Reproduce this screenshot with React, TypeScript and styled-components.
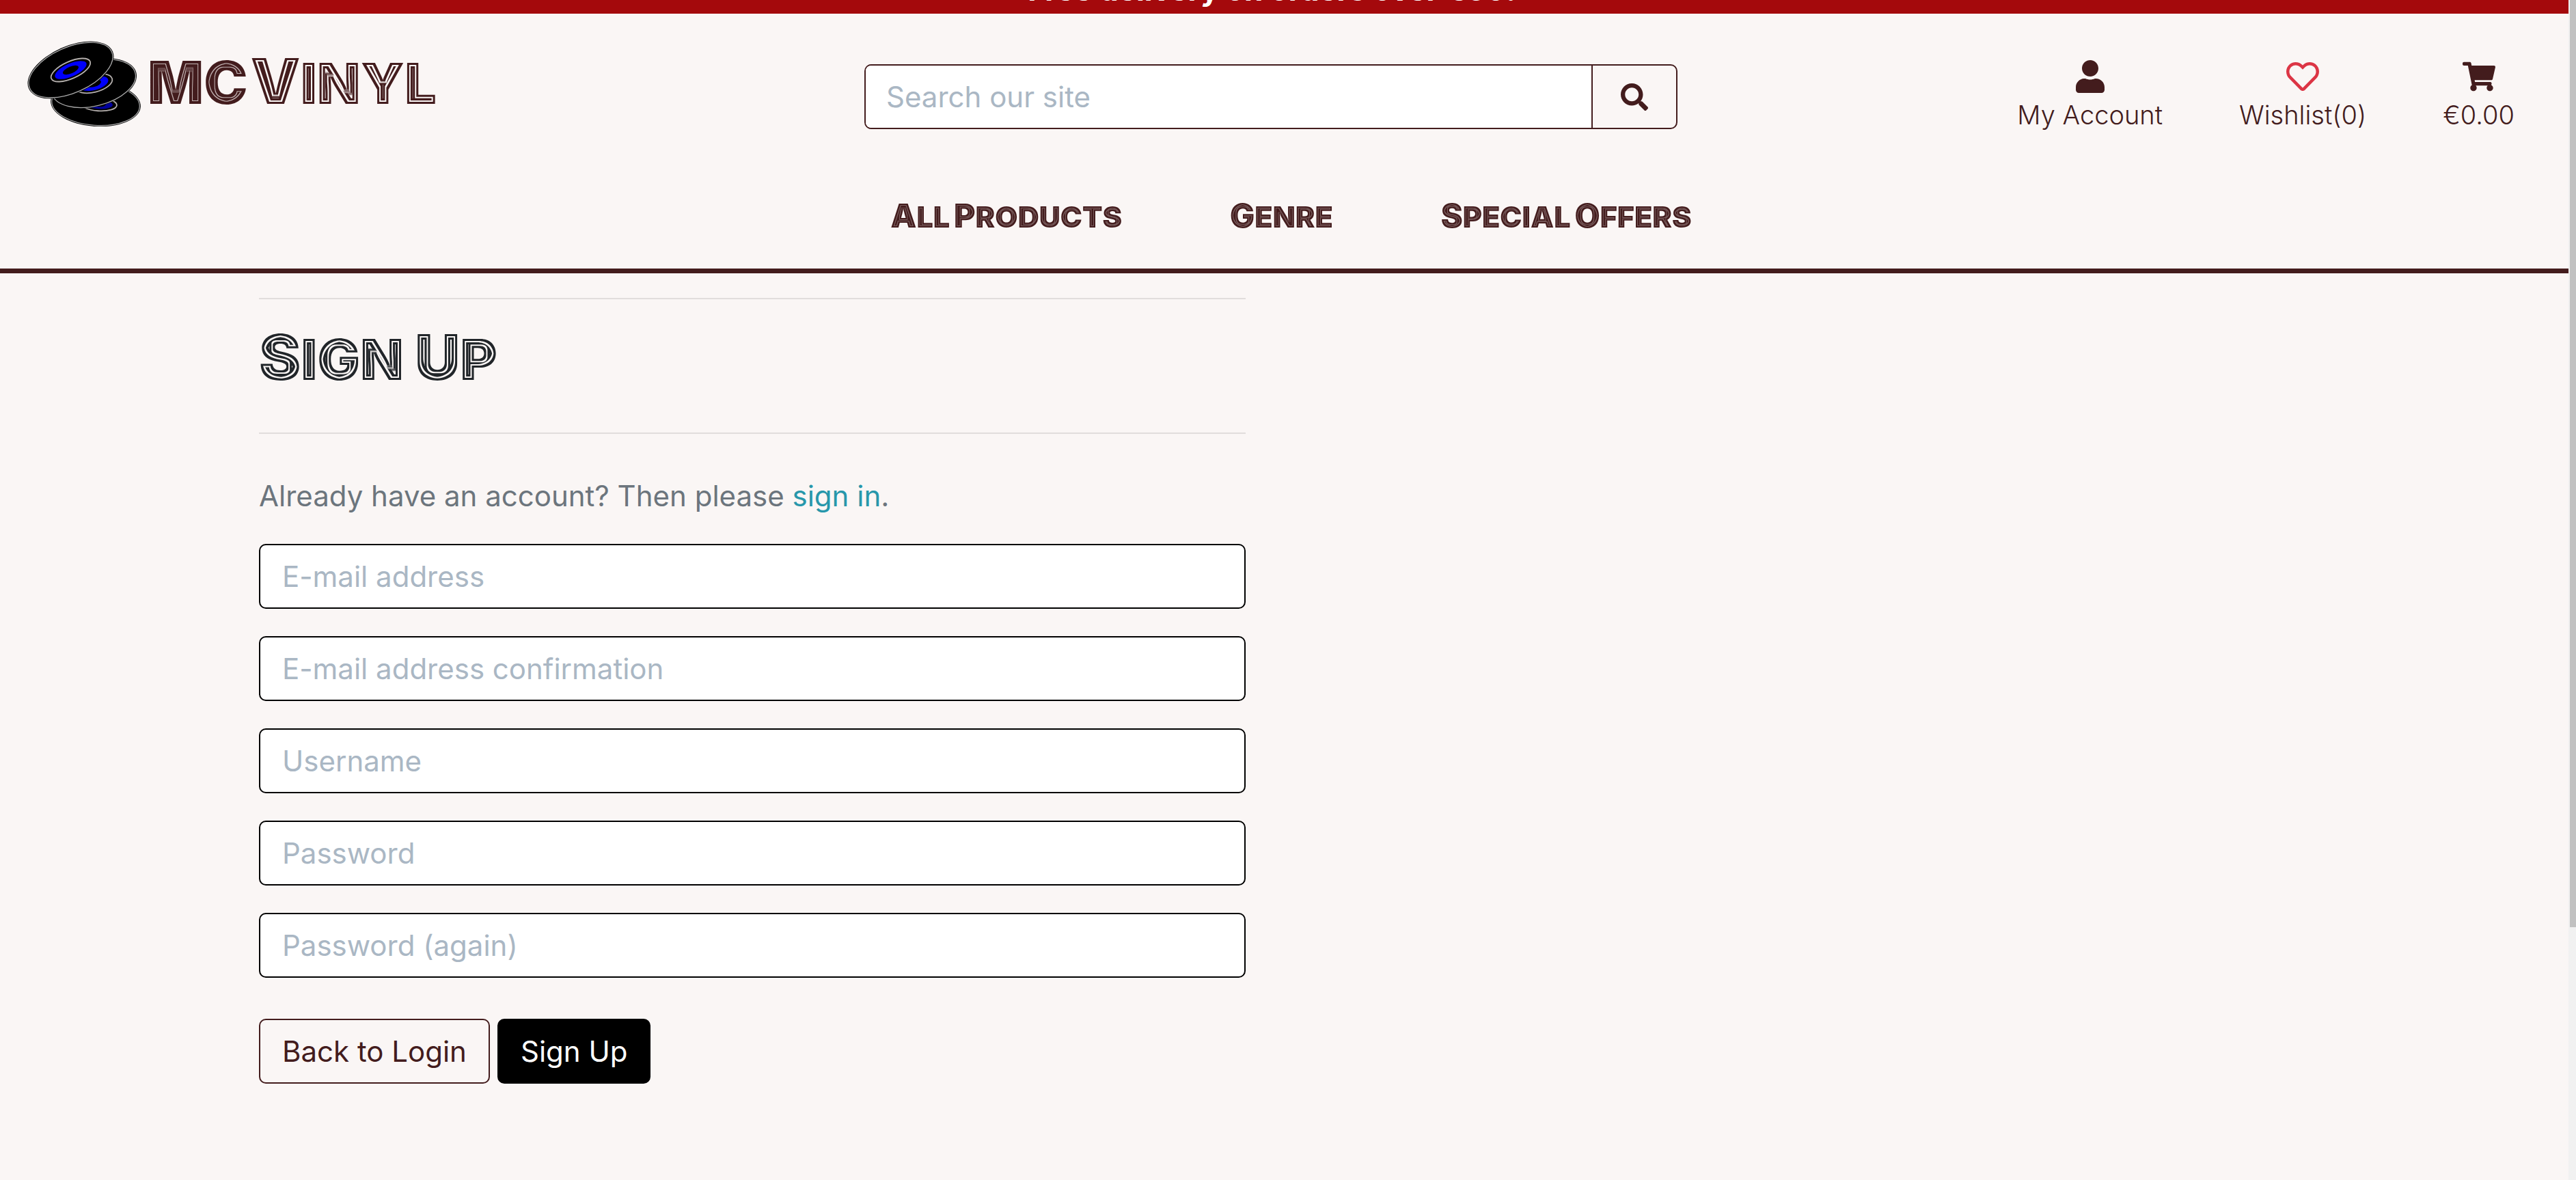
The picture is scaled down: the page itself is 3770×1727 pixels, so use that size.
import React from "react";
import styled, { createGlobalStyle, css } from "styled-components";
import { FaRegHeart, FaSearch, FaShoppingCart, FaUser } from "react-icons/fa";

const maroon = "#431c1d";

const GlobalStyle = createGlobalStyle`
  *, *::before, *::after { box-sizing: border-box; }
  body {
    margin: 0;
    background: #faf6f5;
    color: #212529;
    font-family: Inter, "Open Sans", sans-serif;
    font-size: 42px;
    line-height: 60px;
  }
  a { color: inherit; text-decoration: none; }
`;

const Page = styled.div`
  display: grid;
  grid-template-columns: minmax(0, 1fr) 11px;
  height: 100vh;
  overflow: hidden;
`;

const Content = styled.div`
  overflow: hidden;
`;

const ScrollTrack = styled.div`
  background: #f1f1f1;
  padding-left: 2px;
`;

const ScrollThumb = styled.div`
  height: 78.6%;
  background: #c1c1c1;
`;

const Banner = styled.div`
  display: flex;
  justify-content: center;
  align-items: flex-end;
  height: 20px;
  padding-right: 36px;
  overflow: hidden;
  background: #a4090c;
  color: #fff;
  font-size: 44px;
  font-weight: 700;
  line-height: 70px;
`;

const Header = styled.header`
  border-bottom: 7px solid ${maroon};
  color: ${maroon};
`;

const TopRow = styled.div`
  display: grid;
  grid-template-columns: repeat(3, minmax(0, 1fr));
  align-items: start;
`;

const Logo = styled.a`
  display: flex;
  align-items: center;
  gap: 8px;
  padding: 40px 0 0 40px;
`;

const Discs = styled.svg`
  width: 168px;
  height: 125px;
  flex: none;
`;

const LogoText = styled.span`
  display: flex;
  align-items: baseline;
  gap: 4px;
  padding-bottom: 4px;
  line-height: 90px;
`;

const Initials = styled.span`
  font-size: 86px;
  font-weight: 900;
  line-height: 90px;
  filter: url(#inline-stripes);
`;

const displayType = css`
  display: inline-block;
  font-weight: 900;
  text-transform: uppercase;
`;

const StripedWord = styled.span`
  ${displayType}
  font-size: 83px;
  line-height: 90px;
  filter: url(#stripes);
  &::first-letter { font-size: 92px; }
`;

const NavWord = styled.span`
  ${displayType}
  font-size: 43px;
  line-height: 60px;
  filter: url(#hairlines);
  &::first-letter { font-size: 48px; }
`;

const SearchForm = styled.form`
  display: flex;
  width: 95%;
  height: 95px;
  margin: 74px 0 0 12px;
  border: 2px solid ${maroon};
  border-radius: 10px;
  overflow: hidden;
`;

const SearchInput = styled.input`
  flex: 1;
  min-width: 0;
  border: 0;
  border-right: 2px solid ${maroon};
  padding: 0 30px;
  background: #fff;
  font: inherit;
  &::placeholder { color: #aab7c4; opacity: 1; }
`;

const SearchButton = styled.button`
  display: grid;
  place-items: center;
  width: 122px;
  border: 0;
  background: transparent;
  color: ${maroon};
  font-size: 40px;
`;

const Shortcuts = styled.nav`
  display: flex;
  justify-content: flex-end;
  gap: 112px;
  padding: 68px 79px 0 0;
  font-size: 38px;
  font-weight: 300;
  line-height: 60px;
`;

const Shortcut = styled.a<{ $icon?: string }>`
  display: flex;
  flex-direction: column;
  align-items: center;
  gap: 2px;
  svg { font-size: 48px; color: ${(p) => p.$icon ?? "inherit"}; }
`;

const MainNav = styled.nav`
  display: flex;
  justify-content: center;
  gap: 158px;
  padding: 88px 0 46px 20px;
`;

const NavLink = styled.a`
  display: flex;
  gap: 6px;
`;

const Main = styled.main`
  padding: 36px 379px 0;
`;

const Column = styled.section`
  max-width: 1444px;
`;

const Rule = styled.hr`
  margin: 0;
  border: 0;
  border-top: 2px solid #e1dddc;
`;

const Title = styled.h1`
  display: flex;
  gap: 16px;
  margin: 0;
  padding: 40px 0 62px;
`;

const Intro = styled.p`
  margin: 61px 0 40px;
  color: #6c757d;
`;

const SignInLink = styled.a`
  && { color: #2797ab; }
`;

const Fields = styled.form`
  display: flex;
  flex-direction: column;
  gap: 40px;
`;

const Field = styled.input`
  width: 100%;
  height: 95px;
  border: 2px solid #000;
  border-radius: 10px;
  padding: 0 32px;
  background: #fff;
  font: inherit;
  &::placeholder { color: #aab7c4; opacity: 1; }
`;

const Actions = styled.div`
  display: flex;
  gap: 11px;
  padding-top: 20px;
`;

const action = css`
  height: 95px;
  border: 2px solid ${maroon};
  border-radius: 10px;
  padding: 0 32px;
  font: inherit;
  line-height: 91px;
`;

const BackLink = styled.a`
  ${action}
  && { color: ${maroon}; }
`;

const SubmitButton = styled.button`
  ${action}
  border-color: #000;
  background: #000;
  color: #fff;
`;

const FilterDefs = styled.svg`
  position: absolute;
  width: 0;
  height: 0;
`;

/* Filters that carve concentric lines into the heavy display type. */
function DisplayFilters() {
  return (
    <FilterDefs aria-hidden="true">
      <filter id="stripes" colorInterpolationFilters="sRGB">
        <feMorphology in="SourceAlpha" operator="erode" radius="3" result="a" />
        <feMorphology in="SourceAlpha" operator="erode" radius="5" result="b" />
        <feMorphology in="SourceAlpha" operator="erode" radius="8" result="c" />
        <feComposite in="SourceGraphic" in2="a" operator="out" result="outer" />
        <feComposite in="SourceGraphic" in2="b" operator="in" result="core" />
        <feComposite in="core" in2="c" operator="out" result="inner" />
        <feMerge>
          <feMergeNode in="outer" />
          <feMergeNode in="inner" />
        </feMerge>
      </filter>
      <filter id="inline-stripes" colorInterpolationFilters="sRGB">
        <feMorphology in="SourceAlpha" operator="erode" radius="4" result="a" />
        <feMorphology in="SourceAlpha" operator="erode" radius="5" result="b" />
        <feComposite in="a" in2="b" operator="out" result="gap" />
        <feComponentTransfer in="gap" result="line">
          <feFuncA type="linear" slope="0.7" />
        </feComponentTransfer>
        <feComposite in="SourceGraphic" in2="line" operator="out" />
      </filter>
      <filter id="hairlines" colorInterpolationFilters="sRGB">
        <feMorphology in="SourceAlpha" operator="erode" radius="2" result="a" />
        <feMorphology in="SourceAlpha" operator="erode" radius="3" result="b" />
        <feComposite in="a" in2="b" operator="out" result="gap" />
        <feComponentTransfer in="gap" result="line">
          <feFuncA type="linear" slope="0.3" />
        </feComponentTransfer>
        <feComposite in="SourceGraphic" in2="line" operator="out" />
      </filter>
    </FilterDefs>
  );
}

type DiscProps = { x: number; y: number; a: number; b: number; tilt: number; la: number; lb: number; lx?: number; blue: string };

function Disc({ x, y, a, b, tilt, la, lb, lx = 0, blue }: DiscProps) {
  return (
    <g transform={`translate(${x} ${y}) rotate(${tilt})`}>
      <ellipse rx={a} ry={b} fill="#000" />
      <ellipse rx={a - 1.6} ry={b - 1.6} fill="none" stroke="#aaa" strokeWidth="1.3" />
      <ellipse cx={lx} rx={la} ry={lb} fill="#000" stroke="#b5b0ae" strokeWidth="1.8" />
      <ellipse cx={lx} rx={la - 6} ry={lb - 3} fill={blue} />
      <ellipse cx={lx} rx={la * 0.4} ry={lb * 0.4} fill="#000" />
    </g>
  );
}

const fields = [
  { name: "email", type: "email", label: "E-mail address" },
  { name: "email2", type: "email", label: "E-mail address confirmation" },
  { name: "username", type: "text", label: "Username" },
  { name: "password1", type: "password", label: "Password" },
  { name: "password2", type: "password", label: "Password (again)" },
];

const sections = ["All Products", "Genre", "Special Offers"];

export default function App() {
  return (
    <Page>
      <GlobalStyle />
      <Content>
        <DisplayFilters />
        <Banner>Free delivery on orders over €50!</Banner>
        <Header>
          <TopRow>
            <Logo href="#">
              <Discs viewBox="0 0 168 125" aria-hidden="true">
                <Disc x={100} y={92} a={66} b={33} tilt={4} la={27} lb={10} lx={4} blue="#00009c" />
                <Disc x={97} y={62} a={64.4} b={34.6} tilt={-14} la={28} lb={13} blue="#0000fa" />
                <Disc x={63.5} y={42.5} a={67.2} b={34.9} tilt={-24} la={31} lb={12.5} blue="#0000fa" />
              </Discs>
              <LogoText>
                <Initials>MC</Initials>
                <StripedWord>Vinyl</StripedWord>
              </LogoText>
            </Logo>
            <SearchForm>
              <SearchInput type="text" aria-label="Search our site" placeholder="Search our site" />
              <SearchButton type="button" aria-label="Search"><FaSearch /></SearchButton>
            </SearchForm>
            <Shortcuts>
              <Shortcut href="#"><FaUser />My Account</Shortcut>
              <Shortcut href="#" $icon="#dc3545"><FaRegHeart />Wishlist(0)</Shortcut>
              <Shortcut href="#"><FaShoppingCart />€0.00</Shortcut>
            </Shortcuts>
          </TopRow>
          <MainNav>
            {sections.map((s) => (
              <NavLink href="#" key={s}>
                {s.split(" ").map((w) => <NavWord key={w}>{w}</NavWord>)}
              </NavLink>
            ))}
          </MainNav>
        </Header>
        <Main>
          <Column>
            <Rule />
            <Title>
              <StripedWord>Sign</StripedWord>
              <StripedWord>Up</StripedWord>
            </Title>
            <Rule />
            <Intro>
              Already have an account? Then please <SignInLink href="#">sign in</SignInLink>.
            </Intro>
            <Fields>
              {fields.map((f) => (
                <Field key={f.name} name={f.name} type={f.type} aria-label={f.label} placeholder={f.label} />
              ))}
              <Actions>
                <BackLink href="#">Back to Login</BackLink>
                <SubmitButton type="button">Sign Up</SubmitButton>
              </Actions>
            </Fields>
          </Column>
        </Main>
      </Content>
      <ScrollTrack aria-hidden="true"><ScrollThumb /></ScrollTrack>
    </Page>
  );
}
